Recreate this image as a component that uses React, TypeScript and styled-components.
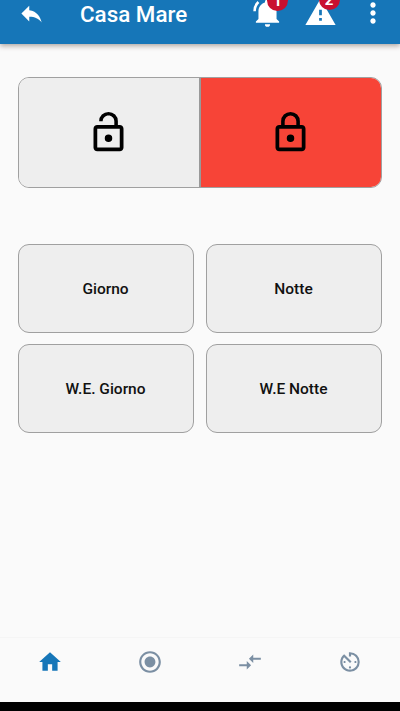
import React from "react";
import styled, { createGlobalStyle } from "styled-components";
import {
  MdReply,
  MdMoreVert,
  MdHome,
  MdRadioButtonChecked,
  MdCompareArrows,
  MdAvTimer,
} from "react-icons/md";

const GlobalStyle = createGlobalStyle`
  * { box-sizing: border-box; }
  body { margin: 0; background: #fafafa; }
  button { font: inherit; color: inherit; border: 0; padding: 0; background: none; cursor: pointer; }
  svg { display: block; flex: none; }
`;

const Screen = styled.div`
  display: flex;
  flex-direction: column;
  height: 711px;
  overflow: hidden;
  background: #fafafa;
  color: #111;
  font-family: Roboto, sans-serif;
`;

const AppBar = styled.header`
  display: flex;
  align-items: center;
  flex: none;
  height: 60px;
  margin-top: -16px;
  padding: 0 11px 4px 18px;
  background: #1676b8;
  color: #fff;
  box-shadow: 0 2px 5px rgba(70, 50, 40, 0.42);
`;

const BackButton = styled.button`
  padding-top: 2px;
`;

const Title = styled.h1`
  flex: 1;
  margin: 3px 0 0 35px;
  font-size: 22.4px;
  line-height: 28px;
  font-weight: 500;
`;

const Actions = styled.div`
  display: flex;
  align-items: center;
  gap: 20.5px;
`;

const Action = styled.button`
  position: relative;
  display: flex;
  padding-top: 1px;
`;

const Badge = styled.span`
  position: absolute;
  top: -6px;
  left: 15px;
  width: 21px;
  height: 21px;
  border-radius: 50%;
  background: #c9102f;
  color: #fff;
  font-size: 15px;
  line-height: 23px;
  font-weight: 700;
  text-align: center;
`;

const Content = styled.main`
  flex: 1;
  padding: 33px 18px 0;
`;

const LockToggle = styled.div`
  display: flex;
  height: 111px;
  border: 1px solid #a0a0a0;
  border-radius: 11px;
  overflow: hidden;
`;

const LockOption = styled.button<{ $active?: boolean }>`
  display: flex;
  align-items: center;
  justify-content: center;
  flex: 1;
  padding-right: 1px;
  color: #000;
  background: ${(p) => (p.$active ? "#f74437" : "#eee")};

  & + & {
    border-left: 2px solid #999;
  }
`;

const SceneGrid = styled.div`
  display: grid;
  grid-template-columns: 1fr 1fr;
  gap: 11px 12px;
  margin-top: 56px;
`;

const SceneButton = styled.button`
  height: 89px;
  padding-right: 1px;
  border: 1px solid #a0a0a0;
  border-radius: 11px;
  background: #eee;
  color: #111;
  font-size: 15.5px;
  font-weight: 500;
`;

const BottomNav = styled.nav`
  display: grid;
  grid-template-columns: repeat(4, 1fr);
  flex: none;
  height: 65px;
  padding-top: 11px;
  border-top: 1px solid #f5f5f5;
  background: #fafafa;
`;

const NavItem = styled.button<{ $active?: boolean }>`
  display: flex;
  justify-content: center;
  align-items: flex-start;
  color: ${(p) => (p.$active ? "#1676b8" : "#7b8fa3")};
`;

const SystemBar = styled.div`
  flex: none;
  height: 9px;
  background: #000;
`;

const BellIcon = () => (
  <svg width="31" height="31" viewBox="0 0 24 24" fill="currentColor">
    <path d="M21 19v1H3v-1l2-2v-6c0-3.1 2.03-5.83 5-6.71V4a2 2 0 0 1 4 0v.29c2.97.88 5 3.61 5 6.71v6l2 2m-7 2a2 2 0 0 1-4 0M1 11h2c0-2.4.96-4.7 2.67-6.39L4.25 3.19A10.97 10.97 0 0 0 1 11z" />
  </svg>
);

const AlertIcon = () => (
  <svg width="33" height="33" viewBox="0 0 24 24" fill="currentColor">
    <path d="M13 14h-2v-4h2m0 8h-2v-2h2M1 21h22L12 2 1 21z" />
  </svg>
);

const shackle = {
  open: "M7 6h1.9c0-1.71 1.39-3.1 3.1-3.1s3.1 1.39 3.1 3.1v2.5H17V6A5 5 0 0 0 7 6z",
  closed: "M7 8.5h1.9V6a3.1 3.1 0 0 1 6.2 0v2.5H17V6A5 5 0 0 0 7 6z",
};

const LockIcon = ({ state }: { state: keyof typeof shackle }) => (
  <svg width="45" height="45" viewBox="0 0 24 24" fill="currentColor">
    <path d={shackle[state]} />
    <path d="M12 17a2 2 0 1 0 0-4 2 2 0 0 0 0 4zm6-9H6c-1.1 0-2 .9-2 2v10c0 1.1.9 2 2 2h12c1.1 0 2-.9 2-2V10c0-1.1-.9-2-2-2zm0 12H6V10h12v10z" />
  </svg>
);

const scenes = ["Giorno", "Notte", "W.E. Giorno", "W.E Notte"];

const tabs = [
  { label: "Home", Icon: MdHome },
  { label: "Record", Icon: MdRadioButtonChecked },
  { label: "Compare", Icon: MdCompareArrows },
  { label: "Timer", Icon: MdAvTimer },
];

export default function App() {
  return (
    <Screen>
      <GlobalStyle />
      <AppBar>
        <BackButton aria-label="Back">
          <MdReply size={27} />
        </BackButton>
        <Title>Casa Mare</Title>
        <Actions>
          <Action aria-label="Notifications">
            <BellIcon />
            <Badge>1</Badge>
          </Action>
          <Action aria-label="Alerts">
            <AlertIcon />
            <Badge>2</Badge>
          </Action>
          <Action aria-label="More">
            <MdMoreVert size={32} />
          </Action>
        </Actions>
      </AppBar>
      <Content>
        <LockToggle>
          <LockOption aria-label="Unlock">
            <LockIcon state="open" />
          </LockOption>
          <LockOption $active aria-label="Lock">
            <LockIcon state="closed" />
          </LockOption>
        </LockToggle>
        <SceneGrid>
          {scenes.map((name) => (
            <SceneButton key={name}>{name}</SceneButton>
          ))}
        </SceneGrid>
      </Content>
      <BottomNav>
        {tabs.map(({ label, Icon }, i) => (
          <NavItem key={label} $active={i === 0} aria-label={label}>
            <Icon size={26} />
          </NavItem>
        ))}
      </BottomNav>
      <SystemBar />
    </Screen>
  );
}
